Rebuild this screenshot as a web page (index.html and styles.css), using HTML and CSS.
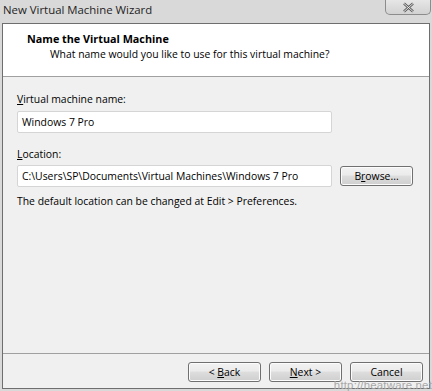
FILE: index.html
```html
<!DOCTYPE html>
<html lang="en">
<head>
    <meta charset="UTF-8">
    <title>New Virtual Machine Wizard</title>
    <link rel="stylesheet" href="styles.css">
</head>
<body>
    <div class="window">
        <div class="titlebar">
            <span class="title">New Virtual Machine Wizard</span>
            <div class="close">
                <svg width="13" height="11" viewBox="0 0 13 11">
                    <path d="M2 1.5 L11 9.5 M11 1.5 L2 9.5" stroke="#5a5a5a" stroke-width="2.4" fill="none"/>
                    <path d="M2 1.5 L11 9.5 M11 1.5 L2 9.5" stroke="#f4f4f4" stroke-width="0.9" fill="none"/>
                </svg>
            </div>
        </div>
        <div class="frame">
            <div class="header">
                <h1>Name the Virtual Machine</h1>
                <p>What name would you like to use for this virtual machine?</p>
            </div>
            <div class="content">
                <label class="field-label"><u>V</u>irtual machine name:</label>
                <div class="row">
                    <div class="textbox">Windows 7 Pro</div>
                </div>
                <label class="field-label second"><u>L</u>ocation:</label>
                <div class="row">
                    <div class="textbox">C:\Users\SP\Documents\Virtual Machines\Windows 7 Pro</div>
                    <button class="btn browse">B<u>r</u>owse...</button>
                </div>
                <p class="note">The default location can be changed at Edit &gt; Preferences.</p>
            </div>
            <div class="footer">
                <button class="btn">&lt; <u>B</u>ack</button>
                <button class="btn"><u>N</u>ext &gt;</button>
                <button class="btn">Cancel</button>
            </div>
        </div>
        <span class="watermark">http://heatware.net</span>
    </div>
</body>
</html>
```

FILE: styles.css
```css
body {
    margin: 0;
    font-family: "Open Sans", "Liberation Sans", sans-serif;
    font-size: 10.4px;
    color: #000;
}
.window {
    position: relative;
    width: 432px;
    height: 391px;
    background: #d9d9d9;
    box-sizing: border-box;
    padding: 0 2px 2px 2px;
    display: flex;
    flex-direction: column;
}
.titlebar {
    height: 23px;
    display: flex;
    justify-content: space-between;
    align-items: flex-start;
}
.title {
    font-size: 11.4px;
    color: #1e1e1e;
    padding: 2px 0 0 1px;
}
.close {
    width: 46px;
    height: 15px;
    box-sizing: border-box;
    border: 1px solid #8c8c8c;
    border-top: none;
    border-radius: 0 0 5px 5px;
    background: linear-gradient(#e6e6e6, #d2d2d2);
    display: flex;
    justify-content: center;
    align-items: center;
    margin-right: -1px;
}
.frame {
    flex: 1;
    border: 1px solid #6e6e6e;
    background: #f0f0f0;
    display: flex;
    flex-direction: column;
}
.header {
    background: #fff;
    height: 53px;
    border-bottom: 1px solid #a0a0a0;
    box-sizing: border-box;
    padding: 7px 0 0 24px;
}
.header h1 {
    font-size: 10.8px;
    font-weight: bold;
    margin: 0;
    line-height: 16px;
}
.header p {
    margin: 0 0 0 23px;
    line-height: 15px;
}
.content {
    flex: 1;
    padding: 14px 0 0 14px;
}
.field-label {
    display: block;
    line-height: 16px;
    margin-bottom: 4px;
}
.field-label.second {
    margin-top: 13px;
    margin-bottom: 3px;
}
.row {
    display: flex;
    align-items: center;
    gap: 8px;
}
.textbox {
    width: 315px;
    height: 22px;
    box-sizing: border-box;
    background: #fff;
    border: 1px solid #d5d5d5;
    border-radius: 2px;
    padding: 0 0 0 4px;
    line-height: 20px;
    white-space: nowrap;
    overflow: hidden;
}
.btn {
    font-family: inherit;
    font-size: 10.4px;
    color: #000;
    width: 73px;
    height: 20px;
    box-sizing: border-box;
    border: 1px solid #707070;
    border-radius: 3px;
    background: linear-gradient(#f2f2f2 0%, #ebebeb 45%, #dddddd 50%, #cfcfcf 100%);
    box-shadow: inset 0 0 0 1px #fcfcfc;
    padding: 0;
    line-height: 17px;
}
.note {
    margin: 6px 0 0;
    line-height: 16px;
}
.footer {
    height: 35px;
    border-top: 1px solid #a0a0a0;
    box-sizing: border-box;
    display: flex;
    justify-content: flex-end;
    align-items: flex-start;
    gap: 8px;
    padding: 8px 6px 0 0;
}
.watermark {
    position: absolute;
    right: 0;
    bottom: 0;
    font-family: "Liberation Sans", sans-serif;
    font-size: 11.4px;
    line-height: 11px;
    color: #a8a8a8;
    letter-spacing: 0.2px;
}
```
